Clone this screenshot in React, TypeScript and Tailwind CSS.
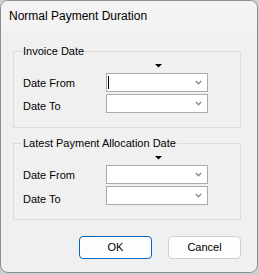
import React from "react";

function Chevron() {
  return (
    <svg width="7" height="5" viewBox="0 0 7 5" className="block">
      <polyline points="0.8,1 3.5,3.8 6.2,1" fill="none" stroke="#8c8c8c" strokeWidth="1.4" />
    </svg>
  );
}

function Combo({ cursor }: { cursor?: boolean }) {
  return (
    <div className="w-[102px] h-[19px] border border-[#ababab] bg-white flex items-center justify-between">
      <div className="ml-[1px] w-[1px] h-[13px]">
        {cursor ? <div className="w-[1px] h-[13px] bg-black" /> : null}
      </div>
      <div className="mr-[5px]">
        <Chevron />
      </div>
    </div>
  );
}

function Arrow() {
  return (
    <svg width="7" height="4" viewBox="0 0 7 4" className="block">
      <polygon points="0,0 7,0 3.5,3.5" fill="#000" />
    </svg>
  );
}

function Group({ title, cursor, pt2 }: { title: string; cursor?: boolean; pt2: string }) {
  return (
    <div className="relative w-[228px] h-[77px] border border-[#dcdcdc]">
      <span className="absolute left-[8px] top-[-8px] px-[1px] bg-[#f0f0f0] leading-[14px] text-[11px] text-black">
        {title}
      </span>
      <div className="pl-[9px] pt-[12px] flex flex-col">
        <div className="ml-[132px] h-[4px]">
          <Arrow />
        </div>
        <div className="mt-[5px] flex items-start h-[19px]">
          <div className="w-[83px] pt-[4px] text-[11px] leading-[13px]">Date From</div>
          <Combo cursor={cursor} />
        </div>
        <div className="mt-[2px] flex items-start h-[19px]">
          <div className={`w-[83px] text-[11px] leading-[13px] ${pt2}`}>Date To</div>
          <Combo />
        </div>
      </div>
    </div>
  );
}

export default function App() {
  return (
    <div
      className="w-[259px] h-[275px] bg-[#cfcfcf]"
      style={{ fontFamily: '"Liberation Sans", Arial, sans-serif' }}
    >
      <div className="w-[258px] h-[273px] rounded-[8px] border border-[#8f8f8f] bg-[#f0f0f0] overflow-hidden flex flex-col text-black">
        <div className="h-[30px] bg-[#f3f3f3] pl-[8px] flex items-center text-[12px] pb-[1px]">
          Normal Payment Duration
        </div>
        <div className="pl-[12px] pt-[20px] flex flex-col">
          <Group title="Invoice Date" cursor pt2="pt-[6px]" />
          <div className="mt-[15px]">
            <Group title="Latest Payment Allocation Date" pt2="pt-[7px]" />
          </div>
          <div className="mt-[16px] w-[228px] flex justify-end gap-[16px]">
            <button className="w-[73px] h-[23px] rounded-[4px] border border-[#0067c0] bg-[#fdfdfd] text-[11px] leading-[13px]">
              OK
            </button>
            <button className="w-[73px] h-[23px] rounded-[4px] border border-[#d0d0d0] bg-[#fdfdfd] text-[11px] leading-[13px]">
              Cancel
            </button>
          </div>
        </div>
      </div>
    </div>
  );
}
